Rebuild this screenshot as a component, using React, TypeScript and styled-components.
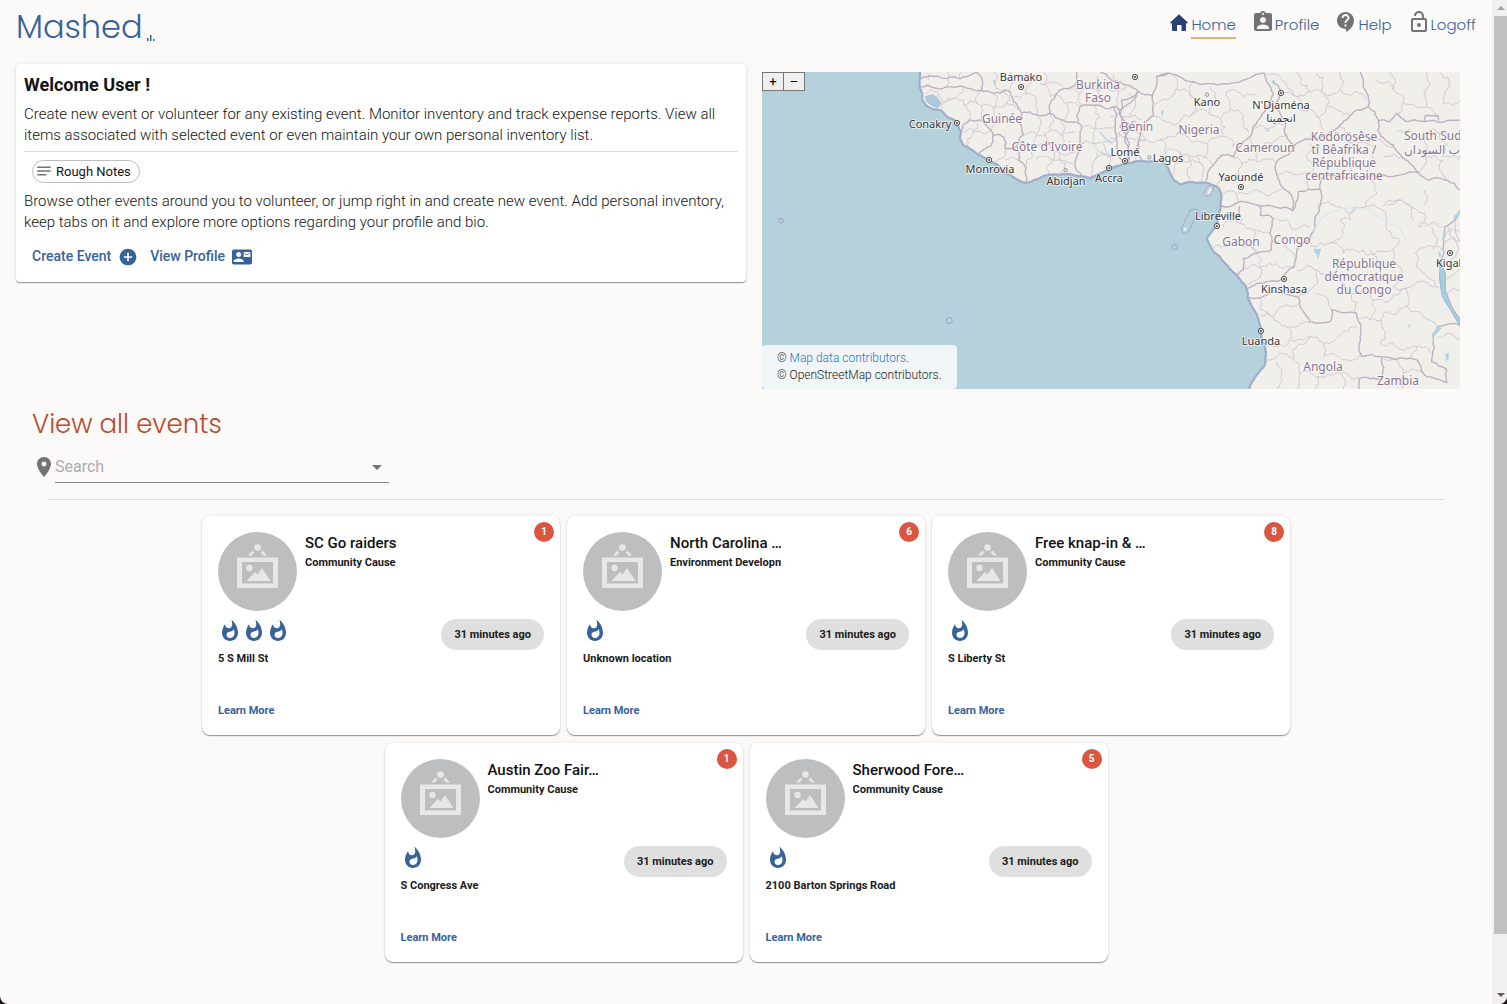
import React from "react";
import styled, { createGlobalStyle } from "styled-components";
import {
  MdAddCircle,
  MdArrowDropDown,
  MdAssignmentInd,
  MdContactMail,
  MdContactSupport,
  MdLocationOn,
  MdLockOpen,
  MdNotes,
  MdWhatshot,
} from "react-icons/md";

const blue = "#37629a";
const display = `Poppins, Inter, "Open Sans", sans-serif`;

const GlobalStyle = createGlobalStyle`
  * { box-sizing: border-box; }
  body {
    margin: 0;
    background: #1c1418;
    color: #141414;
    font-family: Roboto, "Liberation Sans", sans-serif;
    font-size: 15px;
    font-weight: 300;
    line-height: 21px;
  }
  h1, h2, h3, p { margin: 0; }
  a { text-decoration: none; }
  button { font: inherit; color: inherit; cursor: pointer; }
`;

const Shell = styled.div`
  display: flex;
  min-height: 100vh;
  background: #fbfaf8;
  border-radius: 0 0 8px 8px;
  overflow: hidden;
`;

const Page = styled.div`
  flex: 1;
  min-width: 0;
  padding: 0 16px;
`;

const ScrollTrack = styled.div`
  display: flex;
  flex-direction: column;
  align-items: center;
  justify-content: space-between;
  width: 15px;
  padding-left: 2px;
  background: #f1eff0;
`;

const ScrollThumb = styled.div`
  width: 100%;
  flex: 1;
  margin: 6px 0 59px;
  background: #c1c1c1;
`;

const ScrollArrow = styled.div<{ $down?: boolean }>`
  margin: ${(p) => (p.$down ? "0 0 7px" : "6px 0 0")};
  border: 4px solid transparent;
  border-top: ${(p) => (p.$down ? "4px solid #655a4f" : "0")};
  border-bottom: ${(p) => (p.$down ? "0" : "4px solid #a3a3a3")};
`;

const Header = styled.header`
  display: flex;
  justify-content: space-between;
  height: 64px;
`;

const Brand = styled.a`
  display: flex;
  align-items: flex-end;
  gap: 4px;
  height: 48px;
  color: ${blue};
  font: 300 32px/42px ${display};
`;

const BrandMark = styled.svg`
  width: 8px;
  height: 8px;
  margin-bottom: 6px;
`;

const Nav = styled.nav`
  display: flex;
  align-items: flex-start;
  gap: 15px;
  padding-top: 10px;
`;

const NavLink = styled.a<{ $active?: boolean }>`
  display: flex;
  color: ${blue};
  font: 300 15px/22px ${display};
  > svg { color: ${(p) => (p.$active ? "#2a3f73" : "#757275")}; }
  > span {
    padding-top: 4px;
    height: 29px;
    border-bottom: 2px solid ${(p) => (p.$active ? "#e9b062" : "transparent")};
  }
`;

const Top = styled.section`
  display: grid;
  grid-template-columns: 1fr 1fr;
  align-items: start;
`;

const surface = `
  background: #fff;
  box-shadow: 0 1px 1px rgba(0, 0, 0, 0.4), 0 0 4px rgba(0, 0, 0, 0.08);
`;

const Welcome = styled.section`
  ${surface}
  border-radius: 4px;
  padding: 8px;
  height: 218px;
`;

const WelcomeTitle = styled.h1`
  font-size: 18px;
  line-height: 26px;
  margin-bottom: 6px;
`;

const Rule = styled.hr<{ $inset: number }>`
  border: 0;
  border-top: 1px solid #dcdcdc;
  margin: 5px ${(p) => p.$inset}px 8px;
`;

const NotesChip = styled.button`
  display: flex;
  align-items: center;
  gap: 3px;
  height: 23px;
  margin: 0 8px 8px;
  padding: 0 8px 1px 2px;
  border: 1px solid #bdbdbd;
  border-radius: 12px;
  background: #fff;
  font-size: 13px;
  font-weight: 400;
  > svg { color: #757275; }
`;

const Actions = styled.div`
  display: flex;
  gap: 12px;
  padding: 13px 8px;
`;

const ActionLink = styled.a`
  display: flex;
  align-items: center;
  gap: 7px;
  color: ${blue};
  font-size: 14px;
  font-weight: 500;
`;

const MapBox = styled.section`
  position: relative;
  height: 317px;
  margin: 8px 16px;
  background: #b4d1dc;
  overflow: hidden;
`;

const MapDrawing = styled.svg`
  display: block;
  width: 100%;
  height: 100%;
`;

const ZoomControls = styled.div`
  position: absolute;
  top: 0;
  left: 0;
  display: flex;
`;

const ZoomButton = styled.button`
  width: 22px;
  height: 19px;
  padding: 0;
  border: 1px solid #767676;
  background: #efefef;
  color: #000;
  font-size: 13px;
  font-weight: 400;
  line-height: 16px;
  & + & { margin-left: -1px; }
`;

const Attribution = styled.div`
  position: absolute;
  bottom: 0;
  left: 0;
  padding: 5px 15px;
  height: 44px;
  border-radius: 4px;
  background: rgba(255, 255, 255, 0.8);
  font-size: 12px;
  line-height: 17px;
  color: #222;
  > a { color: #2678c4; }
`;

const Events = styled.section`
  padding: 0 0 16px;
`;

const SectionTitle = styled.h2`
  margin: 6px 16px 0;
  color: #b94a2e;
  font: 300 26px/42px ${display};
`;

const SearchRow = styled.div`
  display: flex;
  align-items: center;
  width: 357px;
  height: 38px;
  margin: 0 16px 16px;
  color: #757275;
  > svg { margin-top: 6px; }
`;

const SearchField = styled.div`
  display: flex;
  flex: 1;
  align-items: center;
  height: 38px;
  padding-top: 6px;
  margin-left: -1px;
  border-bottom: 1px solid #8b8b8b;
  color: #757275;
`;

const SearchInput = styled.input`
  flex: 1;
  min-width: 0;
  padding: 0;
  border: 0;
  outline: 0;
  background: none;
  font: 400 16px/24px Roboto, sans-serif;
  &::placeholder { color: #aeacaf; opacity: 1; }
`;

const DropButton = styled.button`
  display: flex;
  padding: 0;
  border: 0;
  background: none;
`;

const Cards = styled.div`
  display: flex;
  flex-wrap: wrap;
  justify-content: center;
  gap: 8px 7px;
  margin: 16px 32px;
`;

const Card = styled.article`
  ${surface}
  position: relative;
  display: flex;
  flex-direction: column;
  width: 358px;
  height: 219px;
  padding: 16px;
  border-radius: 8px;
  font-size: 11px;
  font-weight: 700;
  line-height: 18px;
  color: #1b1b1b;
`;

const Badge = styled.span`
  position: absolute;
  top: 6px;
  right: 6px;
  width: 20px;
  height: 20px;
  border-radius: 50%;
  background: #db5640;
  color: #fff;
  font-size: 10px;
  font-weight: 700;
  line-height: 19px;
  text-align: center;
`;

const CardHead = styled.div`
  display: flex;
  gap: 8px;
`;

const Avatar = styled.svg`
  width: 79px;
  height: 79px;
`;

const CardNames = styled.div`
  width: 111px;
  white-space: nowrap;
  > p { overflow: hidden; }
`;

const CardTitle = styled.h3`
  font-size: 15px;
  font-weight: 500;
  line-height: 22px;
  color: #111;
`;

const CardMeta = styled.div`
  display: flex;
  justify-content: space-between;
  margin-top: 8px;
  color: ${blue};
`;

const TimeChip = styled.time`
  height: 31px;
  padding: 0 13px;
  border-radius: 16px;
  background: #dfdfdf;
  color: #1b1b1b;
  line-height: 31px;
`;

const LearnMore = styled.a`
  margin: auto 0 -1px;
  color: ${blue};
`;

type Point = [number, number];

const parse = (s: string): Point[] =>
  s.split(" ").map((p) => p.split(",").map(Number) as Point);

/* Midpoint displacement gives straight segments the wobble of a surveyed border. */
const rough = (s: string, amount: number) => {
  let pts = parse(s);
  let seed = pts.length * 131 + pts[0][0] * 7 + pts[0][1];
  const rand = () => {
    seed = (seed * 16807 + 11) % 2147483647;
    return seed / 2147483647 - 0.5;
  };
  for (let pass = 0; pass < 3; pass++) {
    const next: Point[] = [pts[0]];
    for (let i = 1; i < pts.length; i++) {
      const [ax, ay] = pts[i - 1];
      const [bx, by] = pts[i];
      const len = Math.hypot(bx - ax, by - ay) || 1;
      const d = rand() * amount * len;
      next.push([(ax + bx) / 2 - ((by - ay) / len) * d, (ay + by) / 2 + ((bx - ax) / len) * d]);
      next.push([bx, by]);
    }
    pts = next;
  }
  return "M" + pts.map(([x, y]) => `${x.toFixed(1)} ${y.toFixed(1)}`).join("L");
};

const coast =
  "480,36 478,60 480,85 487,100 486,120 497,135 520,148 545,152 560,170 590,185 603,215 600,235 608,255 640,272 690,300 735,338 765,355 798,370 830,358 870,343 925,342 965,348 990,355 1020,340 1060,322 1095,312 1150,303 1205,302 1225,325 1240,358 1260,373 1335,367 1355,375 1375,383 1383,400 1382,440 1372,470 1370,497 1355,515 1340,537 1360,575 1395,610 1430,645 1458,680 1463,712 1485,755 1502,800 1505,840 1518,880 1515,915 1490,945 1468,987";

const westMajor = [
  "480,80 530,85 610,80 665,92", "482,58 540,52 600,56 650,36", "650,36 668,70 668,95",
  "668,95 700,100 735,90 750,95 760,125 785,158", "785,158 780,190 790,225 770,260",
  "785,158 830,165 870,160 910,180 945,185", "870,160 875,120 910,85 945,75 950,36",
  "600,215 630,180 660,180 690,210 700,225", "700,225 690,260 655,285",
  "700,225 730,230 735,265 770,260", "770,260 775,300 798,325 798,368",
  "945,185 965,200 960,260 945,305 965,348", "955,185 960,140 1060,140",
  "1060,140 1065,200 1070,260 1092,312", "1078,150 1080,200 1108,250 1108,310",
  "1060,140 1080,150 1110,130 1135,95",
];

const eastMajor = [
  "95,300 98,200 130,165 128,105 140,50 175,40", "-30,35 5,62 45,75 85,95 128,105",
  "58,300 57,190 30,165 35,120 85,95", "140,50 200,45 250,65 320,75 400,60 465,40",
  "288,362 310,315 340,285 370,290 400,245 420,230 445,180 480,130 490,100 465,40",
  "490,60 512,100 495,140 525,185 530,230 555,255", "555,255 620,235 690,195 740,150 775,138",
  "750,36 760,80 775,138", "775,138 805,180 805,215 850,255 900,310 925,340",
  "805,182 840,185 860,160 885,183 945,185 1050,180", "945,185 945,168 985,168 985,183",
  "555,255 500,305 500,345 520,385 548,415 548,450", "333,438 450,438 548,452 565,395 632,390",
  "632,390 640,350 680,345 760,352 820,345 925,335 960,360 1010,360 1050,390",
  "632,390 615,470 600,540 560,570 553,620 520,655 470,665 413,685",
  "450,438 450,465 490,475 480,520 485,570 440,580 400,595 400,630 380,645",
  "333,470 390,470 390,438", "413,712 565,712 600,785 660,785 665,750 740,760 750,830 755,890",
  "755,890 815,890 900,895 925,905 950,950 1010,968 1010,930 965,905 968,825 985,800 1050,795",
  "815,890 815,955 748,955 748,987", "1050,450 1005,500 1000,560 995,600 1000,690 1025,750 1050,795",
];

const westMinor = [
  "497,100 530,95 545,120 590,115", "545,152 560,120 590,110 610,80", "560,36 565,55 560,82",
  "600,56 605,36", "500,40 505,60", "590,115 620,140 625,180", "610,135 650,130 665,92",
  "650,130 665,180", "665,140 700,140 710,185 690,210", "700,100 705,140", "735,90 740,130 700,145",
  "740,130 775,150", "608,215 650,215 690,215", "650,180 640,215 625,262", "735,265 715,300 700,305",
  "735,300 775,300", "750,345 750,310", "790,225 830,225 870,210 945,215", "830,165 830,225 820,265",
  "870,160 870,210", "820,265 800,300 800,325", "820,265 870,260 900,280 945,275",
  "870,260 880,300 860,345", "900,280 905,342", "850,215 855,262", "905,185 910,215 905,260",
  "830,300 880,300 940,310", "750,36 745,90", "800,100 830,125 835,165", "800,36 800,100 760,110",
  "840,70 870,110", "870,110 920,130 955,135", "920,130 915,180", "920,85 960,100 965,140",
  "960,100 1010,90 1060,95 1100,80", "1010,50 1010,90 1020,140", "965,200 1005,205 1065,200",
  "1005,140 1005,205 1000,250", "960,250 1000,250 1070,240", "1000,250 1005,300 985,352",
  "1005,300 1060,290", "1030,250 1040,325", "1060,45 1075,100 1070,140", "1066,225 1108,215",
  "850,36 855,75 910,80", "700,36 705,75 740,90",
];

const eastMinor = [
  "0,170 50,170 97,180", "0,235 57,235 97,240", "57,100 60,170", "78,180 78,300",
  "190,48 195,90 170,120 130,130", "195,90 245,110 250,65", "245,110 240,170 205,190 130,170",
  "205,190 200,225 150,240 98,240", "240,170 300,160 330,175 360,150 350,95", "300,80 300,160",
  "350,95 400,110 440,100", "360,150 400,165 420,220", "330,175 335,230 290,250 280,290",
  "200,225 240,240 290,250", "150,240 165,280 160,305", "165,280 200,270 235,285 280,290 310,315",
  "200,270 195,330 185,345", "235,285 230,330 240,368", "210,310 280,320", "265,290 262,368",
  "335,230 370,260 400,245", "360,290 395,310 390,345 335,360 325,383", "395,310 440,305 500,310",
  "440,305 450,270 500,240 530,230", "450,270 420,235", "340,400 380,405 440,390 520,385",
  "380,405 375,438", "430,210 480,205 525,190", "512,100 560,110 600,95 640,100 690,90",
  "470,45 530,75 560,110", "560,36 570,70 600,95", "560,110 570,150 620,170 640,210",
  "640,100 650,140 700,165 720,165", "650,140 620,170", "690,36 690,90 740,95 770,120",
  "620,40 640,75 640,100", "840,36 850,90 880,130 950,140", "950,36 940,90 950,140 985,168",
  "990,40 1020,80 1000,130 1050,120", "880,130 860,160", "800,60 850,90",
  "600,250 590,290 610,330 600,390", "500,345 560,345 605,335", "690,200 710,240 770,250 850,260",
  "710,240 700,290 720,345", "770,250 790,300 770,350", "820,290 880,300", "860,215 930,230 990,220 1050,235",
  "930,230 945,290 930,335", "990,220 1000,290 1050,300", "945,290 1000,300 1010,360",
  "620,440 690,440 770,440 800,400 790,355", "690,480 700,520 660,550 600,560",
  "690,480 720,480 740,440", "770,440 830,480 870,540 850,570", "830,435 900,435 945,460 925,500 950,490",
  "945,390 945,435", "820,440 905,440 910,480", "660,550 700,580 760,570 830,575 850,570",
  "850,570 850,680 985,680", "915,580 920,620 985,685", "945,495 1000,500", "915,580 995,570",
  "560,630 620,630 680,650 720,700 735,760", "620,630 600,690 565,712", "620,700 665,750",
  "680,650 700,610", "780,570 800,620", "720,700 790,720 850,705 890,685", "790,720 780,780 745,775",
  "890,685 885,740 940,770 985,800", "885,740 820,760 815,780 780,780", "815,780 810,850 880,870 920,860 900,895",
  "920,860 965,880", "445,712 450,750 490,770 565,735", "452,770 490,770 530,800 570,790 600,785",
  "530,800 540,840 600,830 640,850 700,815 740,800", "540,840 500,860 458,850", "470,900 550,895 570,940 560,987",
  "550,895 560,860 600,830", "640,850 640,890 700,900 755,885", "570,940 620,950 690,940 748,955",
  "620,950 615,987", "690,940 700,987", "500,905 510,950 500,987", "340,500 390,490 430,510 480,520",
  "390,470 390,490", "345,560 400,560 440,580", "430,510 420,550 440,580", "310,565 345,560",
  "500,475 540,500 600,500", "490,550 530,560 553,600", "440,580 450,620 500,610 550,620",
  "450,620 440,660 413,672", "400,630 450,625", "965,500 970,570", "1010,700 1050,690",
  "1000,520 1050,515", "1005,545 1050,540", "1015,500 1020,600 1005,640", "1035,470 1035,640 1010,660",
  "1000,610 1050,620", "820,895 870,920 880,987", "880,940 950,950", "985,830 1050,840",
];

type Label = { t: string[]; x: number; y: number; city?: boolean; start?: boolean };

const labels: Label[] = [
  { t: ["Burkina", "Faso"], x: 336, y: 17 },
  { t: ["Guinée"], x: 240, y: 51 },
  { t: ["Côte d'Ivoire"], x: 285, y: 79 },
  { t: ["Bénin"], x: 375, y: 59 },
  { t: ["Nigeria"], x: 437, y: 62 },
  { t: ["Cameroun"], x: 503, y: 80 },
  { t: ["Ködörösêse", "tî Bêafrîka /", "République", "centrafricaine"], x: 582, y: 69 },
  { t: ["South Sudan"], x: 642, y: 68, start: true },
  { t: ["جنوب السودان"], x: 642, y: 82, start: true },
  { t: ["Gabon"], x: 479, y: 174 },
  { t: ["Congo"], x: 530, y: 172 },
  { t: ["République", "démocratique", "du Congo"], x: 602, y: 196 },
  { t: ["Angola"], x: 561, y: 299 },
  { t: ["Zambia"], x: 636, y: 313 },
  { t: ["Bamako"], x: 259, y: 9, city: true },
  { t: ["Conakry"], x: 168, y: 56, city: true },
  { t: ["Monrovia"], x: 228, y: 101, city: true },
  { t: ["Abidjan"], x: 304, y: 113, city: true },
  { t: ["Accra"], x: 347, y: 110, city: true },
  { t: ["Lomé"], x: 363, y: 84, city: true },
  { t: ["Lagos"], x: 406, y: 90, city: true },
  { t: ["Kano"], x: 445, y: 34, city: true },
  { t: ["N'Djaména", "انجمينا"], x: 519, y: 37, city: true },
  { t: ["Yaoundé"], x: 479, y: 109, city: true },
  { t: ["Libreville"], x: 456, y: 148, city: true },
  { t: ["Kinshasa"], x: 522, y: 221, city: true },
  { t: ["Luanda"], x: 499, y: 273, city: true },
  { t: ["Kigali"], x: 674, y: 195, city: true, start: true },
];

const capitals: Point[] = [
  [259, 15], [195, 51], [227, 88], [347, 96], [363, 89], [373, 5], [519, 21],
  [479, 115], [455, 154], [522, 207], [499, 259], [688, 181],
];

const lakes = [
  "M485 62l14 6-4 8-8-4z", "M612 566l14 2 8-2-4 14-8 20-2-16-8-10z", "M965 823l20-22 10 2-18 22-10 10z",
  "M998 520l8-4 2 16-8 4z", "M986 575l6 0 0 18-6-4z", "M1006 882l10-4 0 20-8 6z",
  "M154 150l8 4-4 14-4-4z", "M892 800l10-10-4 14z", "M466 205l14 8-8 2z", "M1030 470l18-18v16l-14 10z",
];

const LabelText = styled.text<{ $city?: boolean }>`
  font-family: "Noto Sans", "DejaVu Sans", sans-serif;
  font-weight: 400;
  font-size: ${(p) => (p.$city ? 11 : 12)}px;
  fill: ${(p) => (p.$city ? "#38363a" : "#8a7390")};
  stroke: rgba(255, 255, 255, 0.65);
  stroke-width: 2px;
  stroke-linejoin: round;
  paint-order: stroke;
`;

const AfricaMap = () => (
  <MapDrawing viewBox="0 0 698 317" preserveAspectRatio="xMidYMid slice" role="img" aria-label="Map of West and Central Africa">
    <g transform="translate(-2 -12) scale(0.33333)" strokeLinejoin="round" fill="none">
      <path d={rough(coast, 0.12) + "L2150 987L2150 36Z"} fill="#f1efea" />
      <path d={rough(coast, 0.12)} stroke="#a3b5ce" strokeWidth="7" />
      <path d={rough(coast, 0.12)} stroke="#9fa5c2" strokeWidth="2.5" />
      <path d="M495 110l22-6 14 8 12 18-10 14-18-8-14-10z" fill="#a9cbdd" stroke="#a8b2ca" strokeWidth="2" />
      <path d="M1020 215l15 20 22 15M1020 275l30 15M700 60l6 6-2 6z" stroke="#b7dbe9" strokeWidth="5" />
      <g stroke="#d0c1d1" strokeWidth="2.6">
        {westMinor.map((d) => <path key={d} d={rough(d, 0.5)} />)}
        <g transform="translate(1050 0)">{eastMinor.map((d) => <path key={d} d={rough(d, 0.5)} />)}</g>
      </g>
      <g stroke="#bfaec3" strokeWidth="4">
        {westMajor.map((d) => <path key={d} d={rough(d, 0.3)} />)}
        <g transform="translate(1050 0)">{eastMajor.map((d) => <path key={d} d={rough(d, 0.25)} />)}</g>
      </g>
      <g transform="translate(1050 0)">
        <path d="M605 535l20-50 35-30 60-12 60 5 40 35 50 20 20 40" stroke="#dde8ee" strokeWidth="4" />
        <path d="M990 600l-1 60 8 50 25 40 28 48 0-20-24-36-20-50 0-50z" fill="#a9cfdf" stroke="#95b3cc" strokeWidth="3" />
        {lakes.map((d) => <path key={d} d={d} fill="#acd5e5" />)}
        <path d="M294 380q14-8 17 4l-8 20q-10 10-20 0-4-8 11-24z" fill="#c5d5dd" stroke="#a3a9c4" strokeWidth="3" />
        <path d="M292 400l8-16 6 4-8 14z" fill="#f1efea" />
        <path d="M240 452q16-10 26 2l-28 56q-8 16-20 8-6-8 0-20z" stroke="#a3a9c4" strokeWidth="3" />
        <path d="M222 502l8 2-4 10-6-4z" fill="#f1efea" />
        <circle cx="194" cy="561" r="8" stroke="#a09fbe" strokeWidth="3" />
      </g>
      <circle cx="63" cy="482" r="7" stroke="#a09fbe" strokeWidth="3" />
      <circle cx="568" cy="782" r="9" stroke="#a09fbe" strokeWidth="3" />
      <g fill="#f5f3ef" stroke="#949196" strokeWidth="3">
        <circle cx="917" cy="330" r="5" />
        <circle cx="1168" cy="292" r="5" />
        <circle cx="1341" cy="104" r="5" />
      </g>
    </g>
    {capitals.map(([x, y]) => (
      <g key={`${x}-${y}`}>
        <circle cx={x} cy={y} r="2.6" fill="#f5f3ef" stroke="#4b494d" />
        <circle cx={x} cy={y} r="1.1" fill="#4b494d" />
      </g>
    ))}
    {labels.map((l) =>
      l.t.map((line, i) => (
        <LabelText key={line} $city={l.city} x={l.x} y={l.y + i * 13} textAnchor={l.start ? "start" : "middle"}>
          {line}
        </LabelText>
      ))
    )}
  </MapDrawing>
);

const HomeIcon = () => (
  <svg width="21" height="24" viewBox="0 0 21 24" fill="currentColor" aria-hidden="true">
    <path d="M9 4.2 17.8 12.6q.4.6-.3.6H16v6.9q0 .9-.9.9h-3.6v-6H7v6H2.900q-.9 0-.9-.9v-6.900H.5q-.7 0-.3-.6z" />
  </svg>
);

const PictureAvatar = () => (
  <Avatar viewBox="0 0 79 79" role="img" aria-label="No event picture">
    <circle cx="39.500" cy="39.500" r="39.500" fill="#bcbec0" />
    <g fill="#e6e7e8">
      <path d="M19 25.500h41V56H19zm5 4.500V51.500h31V30z" fillRule="evenodd" />
      <circle cx="39.500" cy="15.500" r="3.300" />
      <path d="M30 23.500 34.500 18.500 36.500 20.500 33.500 23.500zM49 23.500 44.500 18.500 42.500 20.500 45.500 23.500z" />
      <circle cx="31.500" cy="36" r="3.200" />
      <path d="M28.500 49 37 40 39.500 42.500 44 36 52.500 49z" />
    </g>
  </Avatar>
);

type EventItem = {
  title: string;
  cause: string;
  count: number;
  heat: number;
  place: string;
};

const events: EventItem[] = [
  { title: "SC Go raiders", cause: "Community Cause", count: 1, heat: 3, place: "5 S Mill St" },
  { title: "North Carolina …", cause: "Environment Development", count: 6, heat: 1, place: "Unknown location" },
  { title: "Free knap-in & …", cause: "Community Cause", count: 8, heat: 1, place: "S Liberty St" },
  { title: "Austin Zoo Fair…", cause: "Community Cause", count: 1, heat: 1, place: "S Congress Ave" },
  { title: "Sherwood Fore…", cause: "Community Cause", count: 5, heat: 1, place: "2100 Barton Springs Road" },
];

const EventCard = ({ item }: { item: EventItem }) => (
  <Card>
    <Badge>{item.count}</Badge>
    <CardHead>
      <PictureAvatar />
      <CardNames>
        <CardTitle>{item.title}</CardTitle>
        <p>{item.cause}</p>
      </CardNames>
    </CardHead>
    <CardMeta>
      <div>
        {Array.from({ length: item.heat }, (_, i) => <MdWhatshot key={i} size={24} />)}
      </div>
      <TimeChip>31 minutes ago</TimeChip>
    </CardMeta>
    <p>{item.place}</p>
    <LearnMore href="#event">Learn More</LearnMore>
  </Card>
);

export default function App() {
  return (
    <>
      <GlobalStyle />
      <Shell>
        <Page>
          <Header>
            <Brand href="#home">
              Mashed
              <BrandMark viewBox="0 0 8 8" fill="currentColor" aria-hidden="true">
                <path d="M0 4h1.500v3H0zM3 1h1.500v6H3zM6 5h1.500v2H6z" />
              </BrandMark>
            </Brand>
            <Nav>
              <NavLink href="#home" $active><HomeIcon /><span>Home</span></NavLink>
              <NavLink href="#profile"><MdAssignmentInd size={24} /><span>Profile</span></NavLink>
              <NavLink href="#help"><MdContactSupport size={24} /><span>Help</span></NavLink>
              <NavLink href="#logoff"><MdLockOpen size={24} /><span>Logoff</span></NavLink>
            </Nav>
          </Header>
          <main>
            <Top>
              <Welcome>
                <WelcomeTitle>Welcome User !</WelcomeTitle>
                <p>
                  Create new event or volunteer for any existing event. Monitor inventory and track expense reports.
                  View all items associated with selected event or even maintain your own personal inventory list.
                </p>
                <Rule $inset={0} />
                <NotesChip type="button"><MdNotes size={18} />Rough Notes</NotesChip>
                <p>
                  Browse other events around you to volunteer, or jump right in and create new event. Add personal
                  inventory, keep tabs on it and explore more options regarding your profile and bio.
                </p>
                <Actions>
                  <ActionLink href="#create">Create Event<MdAddCircle size={20} /></ActionLink>
                  <ActionLink href="#profile">View Profile<MdContactMail size={20} /></ActionLink>
                </Actions>
              </Welcome>
              <MapBox>
                <AfricaMap />
                <ZoomControls>
                  <ZoomButton type="button" aria-label="Zoom in">+</ZoomButton>
                  <ZoomButton type="button" aria-label="Zoom out">–</ZoomButton>
                </ZoomControls>
                <Attribution>
                  © <a href="#map">Map data contributors</a>.<br />
                  © OpenStreetMap contributors.
                </Attribution>
              </MapBox>
            </Top>
            <Events>
              <SectionTitle>View all events</SectionTitle>
              <SearchRow>
                <MdLocationOn size={24} />
                <SearchField>
                  <SearchInput aria-label="Search events" placeholder="Search" />
                  <DropButton type="button" aria-label="Show options"><MdArrowDropDown size={24} /></DropButton>
                </SearchField>
              </SearchRow>
              <Rule $inset={32} />
              <Cards>
                {events.map((item) => <EventCard key={item.title} item={item} />)}
              </Cards>
            </Events>
          </main>
        </Page>
        <ScrollTrack aria-hidden="true">
          <ScrollArrow />
          <ScrollThumb />
          <ScrollArrow $down />
        </ScrollTrack>
      </Shell>
    </>
  );
}
